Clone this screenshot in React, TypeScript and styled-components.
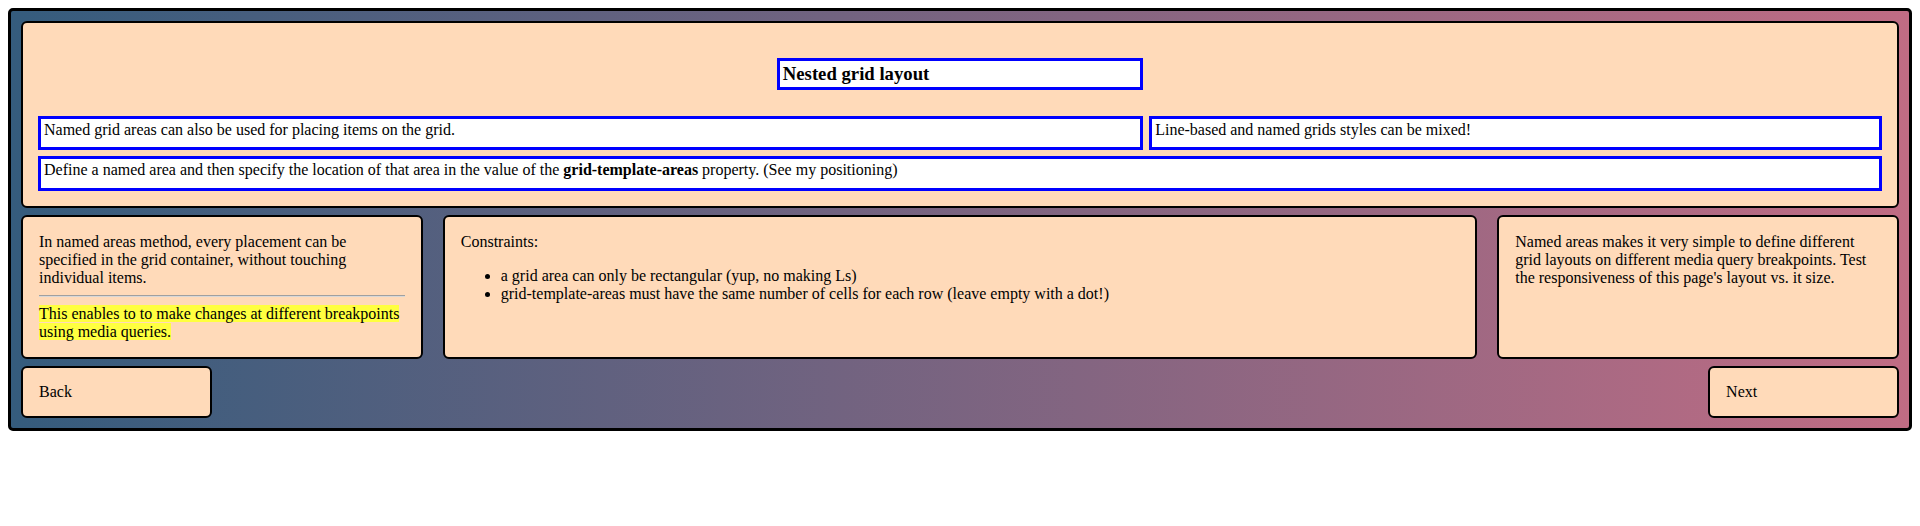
import * as React from 'react'
import styled, { createGlobalStyle } from 'styled-components'

const GlobalStyle = createGlobalStyle`
  body {
    margin: 8px;
    font-family: "Liberation Serif", "Times New Roman", serif;
    font-size: 16px;
    color: #000;
  }

  * {
    box-sizing: border-box;
  }
`

const PageGrid = styled.main`
  display: grid;
  grid-template-columns: repeat(9, 1fr);
  grid-template-rows: 187px 144px 52px;
  gap: 7px 20px;
  padding: 10px;
  border: 3px solid #000;
  border-radius: 5px;
  background: linear-gradient(to right, #355c7d, #c06c84);
`

const Panel = styled.section<{ $column: string }>`
  grid-column: ${(p) => p.$column};
  background-color: #ffdab9;
  border: 2px solid #000;
  border-radius: 6px;
  padding: 16px;
  line-height: normal;
`

// header holds its own little grid
const HeaderPanel = styled(Panel)`
  padding: 35px 15px 10px;
`

const NestedGrid = styled.div`
  display: grid;
  grid-template-columns: 2fr 1fr 2fr;
  grid-template-rows: 52px 34px 35px;
  gap: 6px;
`

const Box = styled.div<{ $column: string }>`
  grid-column: ${(p) => p.$column};
  background-color: #fff;
  border: 3px solid #00f;
  padding: 2px 3px 0;
`

const Title = styled.h3`
  grid-column: 2 / 3;
  align-self: start;
  height: 32px;
  margin: 0;
  background-color: #fff;
  border: 3px solid #00f;
  padding: 0 3px;
  font-size: 18.72px;
  font-weight: bold;
  display: flex;
  align-items: center;
`

const Divider = styled.hr`
  margin: 8px 0;
  height: 0;
  border: none;
  border-top: 1px solid #a0a0a0;
  border-bottom: 1px solid #d8d8d8;
`

const Highlight = styled.span`
  background-color: #ffff40;
`

const List = styled.ul`
  margin: 16px 0;
  padding-left: 40px;
`

const NavButton = styled(Panel)`
  display: flex;
  align-items: center;
  padding: 0 16px;
`

function App() {
  return (
    <>
      <GlobalStyle />
      <PageGrid>
        <HeaderPanel $column="1 / -1">
          <NestedGrid>
            <Title>Nested grid layout</Title>
            <Box $column="1 / 3">
              Named grid areas can also be used for placing items on the grid.
            </Box>
            <Box $column="3 / 4">Line-based and named grids styles can be mixed!</Box>
            <Box $column="1 / -1">
              Define a named area and then specify the location of that area in the value of
              the <b>grid-template-areas</b> property. (See my positioning)
            </Box>
          </NestedGrid>
        </HeaderPanel>

        <Panel $column="1 / 3">
          In named areas method, every placement can be specified in the grid container,
          without touching individual items.
          <Divider />
          <Highlight>
            This enables to to make changes at different breakpoints using media queries.
          </Highlight>
        </Panel>

        <Panel $column="3 / 8">
          Constraints:
          <List>
            <li>a grid area can only be rectangular (yup, no making Ls)</li>
            <li>
              grid-template-areas must have the same number of cells for each row (leave empty
              with a dot!)
            </li>
          </List>
        </Panel>

        <Panel $column="8 / 10">
          Named areas makes it very simple to define different grid layouts on different
          media query breakpoints. Test the responsiveness of this page's layout vs. it size.
        </Panel>

        <NavButton $column="1 / 2">Back</NavButton>
        <NavButton $column="9 / 10">Next</NavButton>
      </PageGrid>
    </>
  )
}

export default App
